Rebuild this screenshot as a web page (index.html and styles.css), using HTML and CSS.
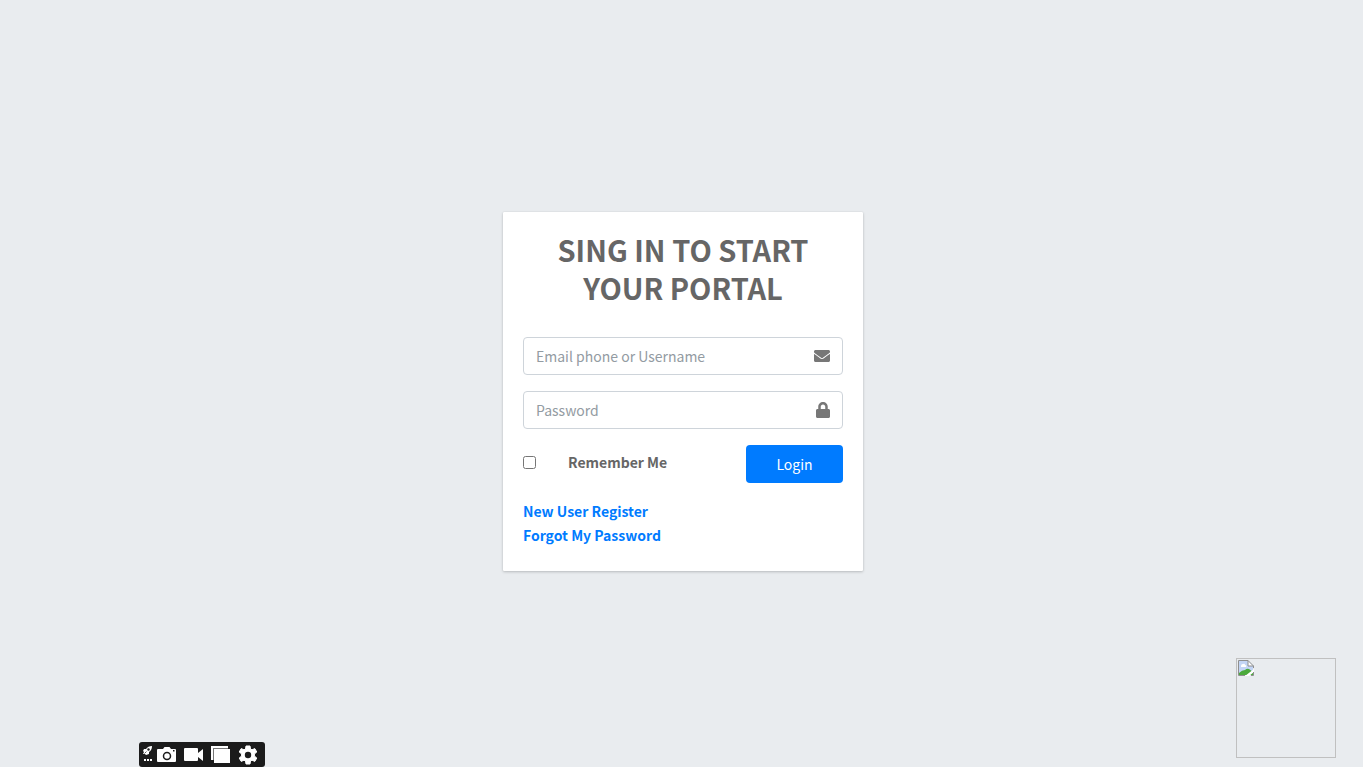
FILE: index.html
```html
<!DOCTYPE html>
<html lang="en">
<head>
    <meta charset="UTF-8">
    <meta name="viewport" content="width=device-width, initial-scale=1.0">
    <title>Login</title>
    <link rel="stylesheet" href="styles.css">
</head>
<body class="login-page">

<main class="login-box">
    <h1 class="login-title">SING IN TO START YOUR PORTAL</h1>

    <form>
        <div class="input-group">
            <input type="text" id="username" placeholder="Email phone or Username" aria-label="Email phone or Username">
            <label class="input-icon" for="username">
                <svg width="16" height="16" viewBox="0 0 512 512" aria-hidden="true"><path d="M502.3 190.8c3.9-3.1 9.7-.2 9.7 4.7V400c0 26.5-21.5 48-48 48H48c-26.500 0-48-21.500-48-48V195.600c0-5 5.700-7.800 9.700-4.700 22.400 17.400 52.100 39.500 154.100 113.600 21.100 15.400 56.700 47.800 92.200 47.600 35.700.3 72-32.800 92.300-47.600 102-74.100 131.600-96.300 154-113.700zM256 320c23.200.4 56.600-29.200 73.400-41.400 132.700-96.300 142.800-104.700 173.400-128.700 5.800-4.500 9.200-11.500 9.200-18.900v-19c0-26.500-21.500-48-48-48H48c-26.500 0-48 21.500-48 48v19c0 7.400 3.400 14.300 9.200 18.900 30.600 23.900 40.700 32.400 173.400 128.700 16.800 12.200 50.200 41.800 73.400 41.400z"/></svg>
            </label>
        </div>
        <div class="input-group">
            <input type="password" id="password" placeholder="Password" aria-label="Password">
            <label class="input-icon" for="password">
                <svg width="14" height="16" viewBox="0 0 448 512" aria-hidden="true"><path d="M400 224h-24v-72C376 68.200 307.800 0 224 0S72 68.200 72 152v72H48c-26.500 0-48 21.500-48 48v192c0 26.500 21.500 48 48 48h352c26.500 0 48-21.500 48-48V272c0-26.500-21.500-48-48-48zm-104 0H152v-72c0-39.700 32.300-72 72-72s72 32.300 72 72v72z"/></svg>
            </label>
        </div>
        <div class="form-row">
            <input type="checkbox" id="remember">
            <label class="remember" for="remember">Remember Me</label>
            <button type="submit" class="btn">Login</button>
        </div>
    </form>

    <nav class="links">
        <a href="#">New User Register</a>
        <a href="#">Forgot My Password</a>
    </nav>
</main>

<!-- image placeholder -->
<div class="float-image">
    <svg width="16" height="16" viewBox="0 0 16 16">
        <path fill="#c3d5f5" d="M1 1h9l5 5v9H1z"/>
        <path fill="#fff" d="M3 6q0-2 2-2 2-1 2 1 2 0 1 2H3z"/>
        <path fill="#4caa3c" d="M1 15v-2q3-3 6-3 2-2 4-1l4 3v3z"/>
        <path fill="#fff" d="M10 1v5h5zM7 16l9-7v3l-5 4z"/>
        <path fill="none" stroke="#8f8f8f" d="M7 15.500H.5V.5H10l5.500 5.500v2M10 .5V6h5.500M13 15.500h2.500V12"/>
    </svg>
</div>

<!-- capture toolbar -->
<div class="toolbar">
    <button type="button" class="tool-small" aria-label="More">
        <svg width="10" height="18" viewBox="0 0 10 18">
            <path fill="#fff" d="M3 3q2-3 6-3 0 4-3 6v2L3 9 2 8H0l1-2-1-1 1-2z"/>
            <circle cx="5.500" cy="3.500" r="1.200" fill="#1b1b1b"/>
            <path fill="none" stroke="#1b1b1b" stroke-width=".7" d="M1.500 7.500l2-2"/>
            <path fill="#fff" d="M1 13h2v2H1zM4 13h2v2H4zM7 13h2v2H7z"/>
        </svg>
    </button>
    <button type="button" aria-label="Screenshot">
        <svg width="20" height="20" viewBox="0 0 20 20">
            <path fill="#fff" d="M1 4h5l1.500-2h5L14 4h4q1 0 1 1v11q0 1-1 1H1q-1 0-1-1V5q0-1 1-1z"/>
            <circle cx="10" cy="11" r="3.500" fill="#fff" stroke="#1b1b1b" stroke-width="1.500"/>
            <path fill="#1b1b1b" d="M16 5h1.500v1.500H16z"/>
        </svg>
    </button>
    <button type="button" aria-label="Record video">
        <svg width="20" height="20" viewBox="0 0 20 20"><path fill="#fff" d="M1 3h12q1 0 1 1v4l5-4v12l-5-4v3q0 1-1 1H1q-1 0-1-1V4q0-1 1-1z"/></svg>
    </button>
    <button type="button" aria-label="Gallery">
        <svg width="20" height="20" viewBox="0 0 20 20"><path fill="#fff" d="M0 1h17v2H2v12H0z"/><path fill="#777" d="M2 3h15v1H3v11H2z"/><path fill="#fff" d="M3 4h16v14H3z"/></svg>
    </button>
    <button type="button" aria-label="Settings">
        <svg width="20" height="20" viewBox="0 0 20 20">
            <path fill="#fff" stroke="#fff" stroke-linejoin="round" d="M8 1h4l.5 3 1.500.8 2.800-1.200 2 3.400-2.400 1.900v2.200l2.400 1.900-2 3.400-2.800-1.200-1.500.8-.5 3H8l-.5-3-1.500-.8-2.800 1.200-2-3.400 2.400-1.900V8.900L1.200 7l2-3.400L6 4.800 7.500 4z"/>
            <circle cx="10" cy="10" r="3.200" fill="#1b1b1b"/>
        </svg>
    </button>
</div>

</body>
</html>
```
FILE: styles.css
```css
* {
    box-sizing: border-box;
}
body {
    margin: 0;
    font-family: "Noto Sans CJK JP", "Noto Sans", sans-serif;
    font-size: 14px;
    line-height: 24px;
    color: #666;
}
.login-page {
    display: flex;
    align-items: center;
    justify-content: center;
    min-height: 100vh;
    padding: 16px 0 0 3px;
    background-color: #e9ecef;
}
.login-box {
    width: 360px;
    max-width: 100%;
    padding: 18px 20px 20px;
    background-color: #fff;
    border-radius: 1px;
    box-shadow: 0 0 1px rgba(0, 0, 0, 0.13), 0 1px 3px rgba(0, 0, 0, 0.2);
}
.login-title {
    margin: 0;
    padding: 0 20px 31px;
    font-size: 29px;
    line-height: 38px;
    font-weight: 700;
    text-align: center;
}
.input-group {
    display: flex;
    height: 38px;
    margin-bottom: 16px;
    border: 1px solid #ced4da;
    border-radius: 4px;
}
.input-group input {
    flex: 1;
    min-width: 0;
    padding: 0 12px;
    border: none;
    background: none;
    outline: none;
    font: inherit;
    color: #495057;
}
.input-group input::placeholder {
    color: #939ba2;
    opacity: 1;
}
.input-icon {
    display: flex;
    align-items: center;
    padding: 0 12px;
    color: #777;
}
.input-icon svg {
    fill: currentColor;
}
.form-row {
    display: flex;
    align-items: center;
    height: 38px;
}
.form-row input {
    width: 13px;
    height: 13px;
    margin: 0 32px 4px 0;
}
.remember {
    margin-bottom: 4px;
    font-weight: 700;
}
.btn {
    width: 97px;
    height: 38px;
    margin-left: auto;
    border: none;
    border-radius: 4px;
    background-color: #007bff;
    color: #fff;
    font: inherit;
    cursor: pointer;
}
.btn:hover {
    background-color: #0069d9;
}
.links {
    display: flex;
    flex-direction: column;
    align-items: flex-start;
    padding: 16px 0 4px;
}
.links a {
    color: #007bff;
    font-weight: 700;
    text-decoration: none;
}
.float-image {
    position: fixed;
    right: 27px;
    bottom: 9px;
    width: 100px;
    height: 100px;
    padding: 1px;
    border: 1px solid #c0c0c0;
    line-height: 0;
}
.toolbar {
    position: fixed;
    left: 139px;
    bottom: 0;
    display: flex;
    align-items: center;
    gap: 7px;
    height: 25px;
    padding: 0 7px 0 4px;
    border-radius: 3px;
    background-color: #1b1b1b;
}
.toolbar button {
    display: flex;
    padding: 0;
    border: none;
    background: none;
    cursor: pointer;
}
.toolbar .tool-small {
    margin-right: -3px;
}
```
